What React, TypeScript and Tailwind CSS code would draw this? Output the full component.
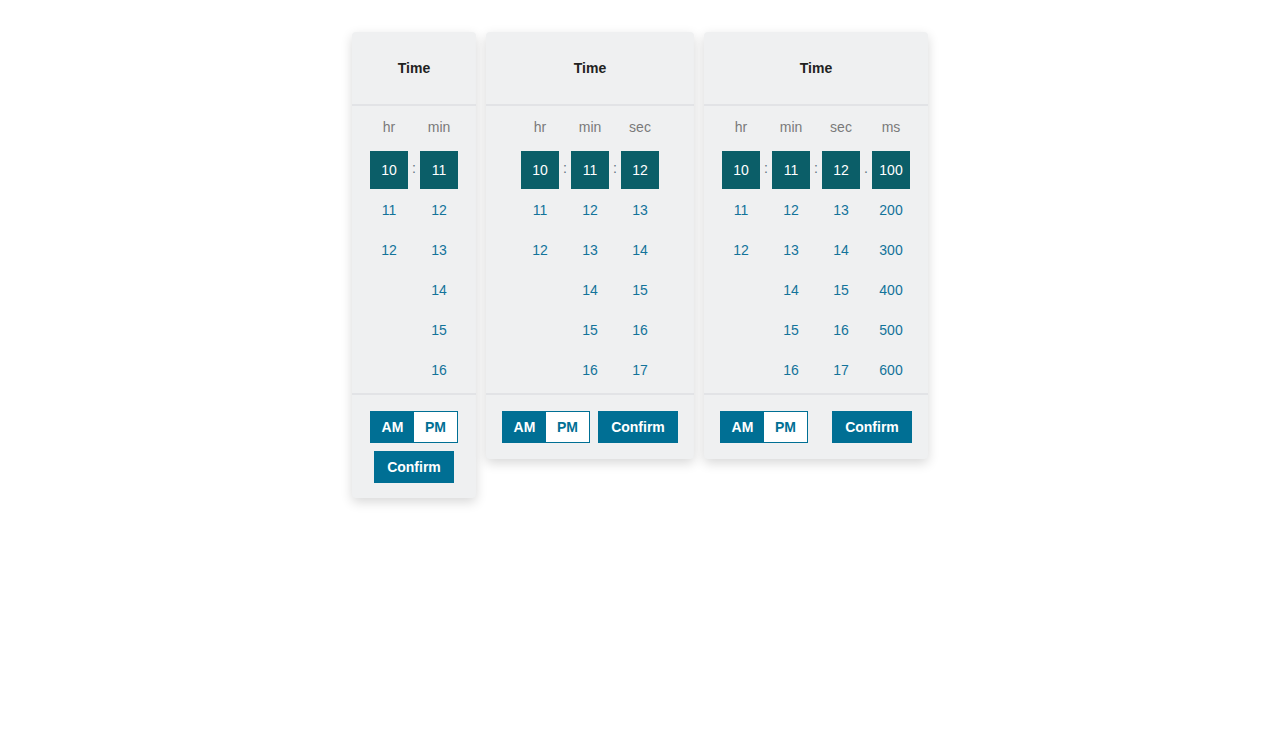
import { Fragment } from "react";

type Column = { label: string; values: string[] };

const HOURS: Column = { label: "hr", values: ["10", "11", "12"] };
const MINUTES: Column = { label: "min", values: ["11", "12", "13", "14", "15", "16"] };
const SECONDS: Column = { label: "sec", values: ["12", "13", "14", "15", "16", "17"] };
const MILLIS: Column = { label: "ms", values: ["100", "200", "300", "400", "500", "600"] };

const ROWS = 6;

function Separator({ char, show }: { char: string; show: boolean }) {
  return (
    <div className="flex h-[38px] w-[12px] items-center justify-center pb-[4px] text-[14px] text-[#5f7382]">
      {show ? char : ""}
    </div>
  );
}

function TimePicker({ columns, footer }: { columns: Column[]; footer: "stacked" | "row" }) {
  const seps = [":", ":", "."];

  return (
    <div className="self-start overflow-hidden rounded-[4px] bg-[#eff0f1] shadow-[0_4px_12px_rgba(0,0,0,0.16)]">
      <div className="flex h-[74px] items-center justify-center border-b-2 border-[#e2e3e6] text-[14px] font-bold text-[#222]">
        Time
      </div>

      <div className="flex flex-col items-center px-[18px] pb-[3px] pt-[11px]">
        <div className="flex h-[20px] items-center">
          {columns.map((col, i) => (
            <Fragment key={col.label}>
              {i > 0 && <div className="w-[12px]" />}
              <div className="w-[38px] text-center text-[14px] text-[#7a7a7a]">{col.label}</div>
            </Fragment>
          ))}
        </div>

        <div className="mt-[13px] flex flex-col">
          {Array.from({ length: ROWS }).map((_, r) => (
            <div key={r} className="flex h-[40px] items-center">
              {columns.map((col, i) => {
                const value = col.values[r];
                return (
                  <Fragment key={col.label}>
                    {i > 0 && <Separator char={seps[i - 1]} show={r === 0} />}
                    <div
                      className={
                        r === 0
                          ? "flex h-[38px] w-[38px] items-center justify-center bg-[#0b5e68] text-[14px] text-white"
                          : "flex h-[38px] w-[38px] items-center justify-center text-[14px] text-[#12739a]"
                      }
                    >
                      {value ?? ""}
                    </div>
                  </Fragment>
                );
              })}
            </div>
          ))}
        </div>
      </div>

      <div
        className={
          footer === "stacked"
            ? "flex flex-col items-center gap-[8px] border-t-2 border-[#e2e3e6] px-[16px] pb-[15px] pt-[16px]"
            : "flex items-center justify-between gap-[8px] border-t-2 border-[#e2e3e6] px-[16px] pb-[16px] pt-[16px]"
        }
      >
        <div className="flex h-[32px] w-[88px] border border-[#006f94] text-[14px] font-bold">
          <button className="flex flex-1 items-center justify-center bg-[#006f94] text-white">AM</button>
          <button className="flex flex-1 items-center justify-center bg-white text-[#006f94]">PM</button>
        </div>
        <button className="flex h-[32px] w-[80px] items-center justify-center bg-[#006f94] text-[14px] font-bold text-white">
          Confirm
        </button>
      </div>
    </div>
  );
}

export default function App() {
  return (
    <div className="min-h-screen bg-white font-['Liberation_Sans',Arial,sans-serif]">
      <div className="flex items-start justify-center gap-[10px] pt-[32px]">
        <TimePicker columns={[HOURS, MINUTES]} footer="stacked" />
        <TimePicker columns={[HOURS, MINUTES, SECONDS]} footer="row" />
        <TimePicker columns={[HOURS, MINUTES, SECONDS, MILLIS]} footer="row" />
      </div>
    </div>
  );
}
